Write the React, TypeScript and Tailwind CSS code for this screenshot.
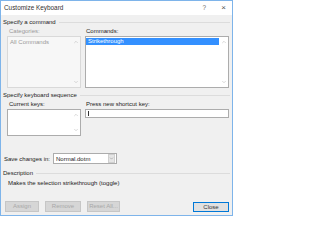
import { ChevronUp, ChevronDown } from "lucide-react";

function GroupHeader({ title }: { title: string }) {
  return (
    <div className="flex items-center gap-[3px] h-[8px]">
      <span className="whitespace-nowrap">{title}</span>
      <div className="flex-1 h-px bg-[#dcdcdc]" />
    </div>
  );
}

function ScrollArrows() {
  return (
    <div className="w-[9px] flex flex-col justify-between items-center py-[2px] text-[#b4b4b4]">
      <ChevronUp size={6} strokeWidth={2} />
      <ChevronDown size={6} strokeWidth={2} />
    </div>
  );
}

export default function App() {
  return (
    <div className="w-[233px] h-[216px] border border-[#7eb4ea] bg-[#f0f0f0] text-[6px] leading-[8px] text-[#222] font-['Liberation_Sans',Arial,sans-serif] flex flex-col">
      <div className="h-[14px] bg-white flex items-center pl-[3px] pr-[6px] text-[6.4px] text-[#333]">
        <span className="flex-1">Customize Keyboard</span>
        <span className="w-[8px] text-center text-[#666]">?</span>
        <span className="ml-[13px] text-[8px] text-[#555]">×</span>
      </div>

      <div className="px-[2px] mt-[3px] flex flex-col">
        <GroupHeader title="Specify a command" />
        <div className="flex gap-[4px] pl-[4px] pr-[1px] mt-[1px]">
          <div className="w-[74px] flex flex-col">
            <span className="pl-[2px] text-[#9a9a9a]">Categories:</span>
            <div className="h-[52px] mt-[1px] border border-[#d9d9d9] bg-[#f7f7f7] flex">
              <div className="flex-1 pl-[2px] pt-[1px] text-[#9a9a9a]">All Commands</div>
              <ScrollArrows />
            </div>
          </div>
          <div className="flex-1 flex flex-col">
            <span className="pl-[1px]">Commands:</span>
            <div className="h-[52px] mt-[1px] border border-[#acacac] bg-white flex">
              <div className="flex-1 pt-px">
                <div className="h-[7px] leading-[7px] bg-[#3390ff] text-[#ffffff] pl-[2px]">
                  Strikethrough
                </div>
              </div>
              <ScrollArrows />
            </div>
          </div>
        </div>

        <div className="mt-[3px]">
          <GroupHeader title="Specify keyboard sequence" />
        </div>
        <div className="flex gap-[4px] pl-[4px] pr-[1px] mt-[1px]">
          <div className="w-[74px] flex flex-col">
            <span className="pl-[2px]">Current keys:</span>
            <div className="h-[27px] mt-[1px] border border-[#acacac] bg-white flex">
              <div className="flex-1" />
              <ScrollArrows />
            </div>
          </div>
          <div className="flex-1 flex flex-col">
            <span className="pl-[1px]">Press new shortcut key:</span>
            <div className="h-[9px] mt-[1px] border border-[#acacac] bg-white flex items-center pl-[2px]">
              <div className="w-px h-[5px] bg-[#333]" />
            </div>
          </div>
        </div>

        <div className="mt-[17px] flex items-center gap-[3px] pl-[1px]">
          <span className="whitespace-nowrap">Save changes in:</span>
          <div className="w-[64px] h-[11px] border border-[#acacac] bg-white flex items-center">
            <span className="flex-1 pl-[2px]">Normal.dotm</span>
            <div className="w-[7px] h-[9px] mr-px bg-[#e5e5e5] border border-[#cfcfcf] flex items-center justify-center text-[#777]">
              <ChevronDown size={5} strokeWidth={2} />
            </div>
          </div>
        </div>

        <div className="mt-[5px]">
          <GroupHeader title="Description" />
        </div>
        <div className="mt-[2px] pl-[5px] h-[8px] whitespace-nowrap">
          Makes the selection strikethrough (toggle)
        </div>

        <div className="mt-[14px] flex items-center pl-[2px] pr-[1px]">
          <div className="flex gap-[6px] text-[#a8a8a8]">
            <button className="w-[34px] h-[11px] bg-[#d6d6d6] border border-[#c6c6c6] leading-[9px]">Assign</button>
            <button className="w-[36px] h-[11px] bg-[#d6d6d6] border border-[#c6c6c6] leading-[9px]">Remove</button>
            <button className="w-[33px] h-[11px] bg-[#d6d6d6] border border-[#c6c6c6] leading-[9px]">Reset All...</button>
          </div>
          <div className="flex-1" />
          <button className="w-[36px] h-[10px] bg-[#e1e1e1] border border-[#0078d7] leading-[8px] text-[#333]">Close</button>
        </div>
      </div>
    </div>
  );
}
